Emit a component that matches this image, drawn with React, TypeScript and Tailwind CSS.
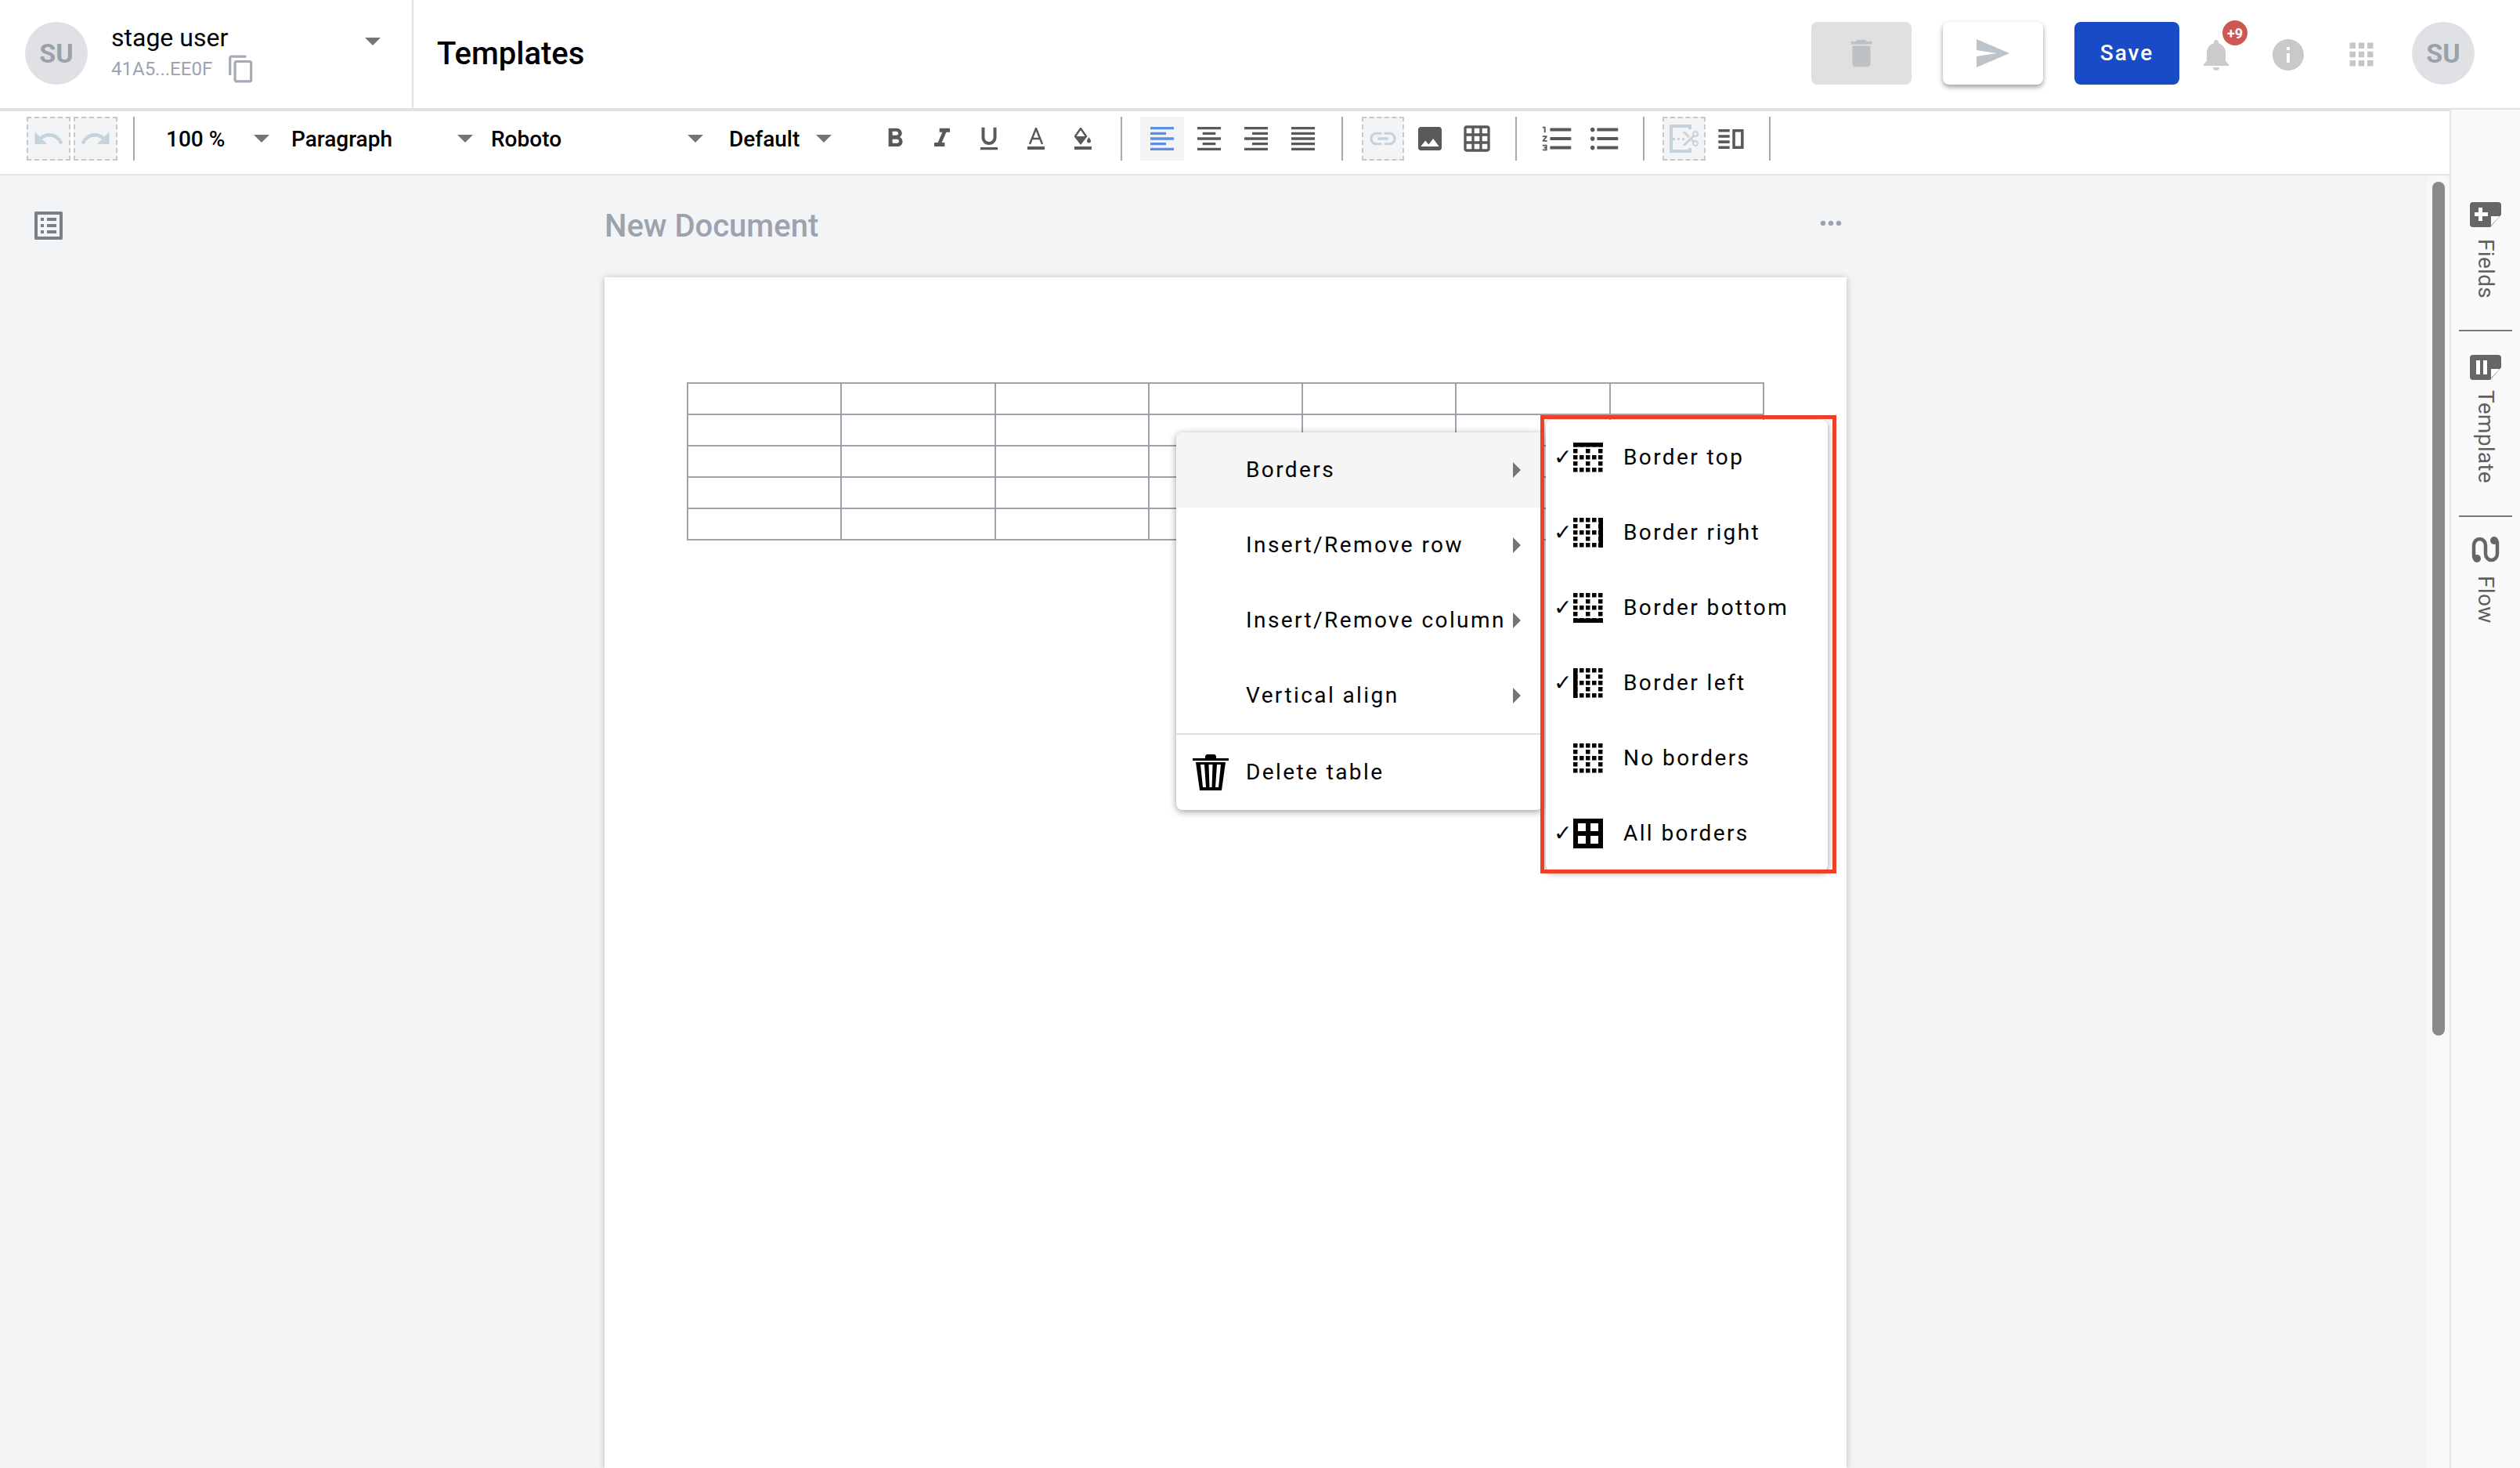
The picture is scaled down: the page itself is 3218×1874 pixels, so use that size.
import type { ReactNode } from 'react'
import {
  MdApps,
  MdContentCopy,
  MdDelete,
  MdFormatAlignCenter,
  MdFormatAlignJustify,
  MdFormatAlignLeft,
  MdFormatAlignRight,
  MdFormatBold,
  MdFormatItalic,
  MdFormatListBulleted,
  MdFormatListNumbered,
  MdFormatUnderlined,
  MdGridOn,
  MdImage,
  MdInfo,
  MdLink,
  MdListAlt,
  MdMoreHoriz,
  MdNotifications,
  MdRedo,
  MdUndo,
} from 'react-icons/md'

const ICON = '#58595b'
const OFF = '#c5d3dd'

function Caret() {
  return <span className="h-0 w-0 shrink-0 border-x-[10px] border-t-[10px] border-x-transparent border-t-[#757575]" />
}

function Divider({ className }: { className: string }) {
  return <span className={`h-[56px] w-[2px] shrink-0 bg-[#a4a9b0] ${className}`} />
}

function Dashed({ className, children }: { className: string; children: ReactNode }) {
  return (
    <span className={`flex h-[56px] shrink-0 items-center justify-center border-2 border-dashed border-[#c6c9cd] bg-[#f3f4f6] ${className}`}>
      {children}
    </span>
  )
}

function Tool({ children }: { children: ReactNode }) {
  return <span className="flex h-[56px] w-[60px] shrink-0 items-center justify-center">{children}</span>
}

function Picker({ label, className }: { label: string; className: string }) {
  return (
    <span className={`flex h-[56px] shrink-0 items-center justify-between text-[28px] font-medium text-black ${className}`}>
      <span className="pt-[2px]">{label}</span>
      <Caret />
    </span>
  )
}

function Avatar() {
  return (
    <span className="flex h-[80px] w-[80px] shrink-0 items-center justify-center rounded-full bg-[#dfe1e5] text-[34px] font-bold text-[#9aa1aa]">
      SU
    </span>
  )
}

function Header() {
  return (
    <header className="flex h-[140px] shrink-0 items-center border-b-2 border-[#e0e2e6] bg-white pb-[2px]">
      <div className="-mb-[2px] flex h-[138px] w-[528px] shrink-0 items-center border-r-2 border-[#dfe1e5] pb-[2px] pl-[32px] pr-[40px]">
        <Avatar />
        <div className="ml-[30px] flex flex-col">
          <span className="text-[32px] leading-[36px] text-black">stage user</span>
          <span className="mt-[4px] flex h-[36px] items-center text-[24px] text-[#9ca3af]">
            41A5...EE0F
            <MdContentCopy size={38} color="#a3acb5" className="ml-[18px]" />
          </span>
        </div>
        <span className="ml-auto">
          <Caret />
        </span>
      </div>
      <h1 className="ml-[30px] mt-[1px] text-[40px] font-medium text-black">Templates</h1>
      <div className="ml-auto flex items-center pr-[58px]">
        <span className="flex h-[80px] w-[128px] items-center justify-center rounded-[8px] bg-[#e0e0e0]">
          <MdDelete size={46} color="#bcc1c6" />
        </span>
        <span className="ml-[40px] flex h-[80px] w-[128px] items-center justify-center rounded-[8px] bg-white shadow-[0_3px_6px_rgba(0,0,0,0.4)]">
          <svg width="42" height="36" viewBox="0 0 42 36">
            <path d="M0 0 42 18 0 36V22L26 18 0 14Z" fill="#bcc4cb" />
          </svg>
        </span>
        <span className="ml-[40px] flex h-[80px] w-[134px] items-center justify-center rounded-[8px] bg-[#1a4bc6] text-[28px] font-medium tracking-[2px] text-white">
          Save
        </span>
        <span className="relative ml-[23px] mt-[4px] flex">
          <MdNotifications size={48} color="#cbcbcb" />
          <span className="absolute -top-[20px] left-[32px] flex h-[32px] w-[32px] items-center justify-center rounded-full bg-[#cd5752] text-[18px] font-bold text-white">
            +9
          </span>
        </span>
        <MdInfo size={48} color="#c8c9ca" className="ml-[44px] mt-[4px]" />
        <MdApps size={45} color="#c6c6c6" className="ml-[47px] mt-[2px]" />
        <span className="ml-[42px] flex">
          <Avatar />
        </span>
      </div>
    </header>
  )
}

function TextColorIcon() {
  return (
    <svg width="22" height="28" viewBox="0 0 22 28">
      <path d="M3 21 11 1 19 21M6 14H16" fill="none" stroke={ICON} strokeWidth="2.500" />
      <rect y="24" width="22" height="4" fill={ICON} />
    </svg>
  )
}

function FillColorIcon() {
  return (
    <svg width="22" height="28" viewBox="0 0 22 28">
      <path d="M8 1 15 11 8 20 1 11Z" fill="none" stroke={ICON} strokeWidth="2.500" />
      <path d="M1 11H15L8 20Z" fill={ICON} />
      <path d="M18.500 12C17 14.500 16 15.500 16 17A2.500 2.500 0 0 0 21 17C21 15.500 20 14.500 18.500 12Z" fill={ICON} />
      <rect y="24" width="22" height="4" fill={ICON} />
    </svg>
  )
}

function PageBreakIcon() {
  return (
    <svg width="38" height="36" viewBox="0 0 38 36">
      <rect x="2" y="2" width="24" height="32" fill="none" stroke={OFF} strokeWidth="4" />
      <rect x="4" y="17" width="3" height="3" fill={OFF} />
      <rect x="10" y="17" width="3" height="3" fill={OFF} />
      <rect x="16" y="17" width="3" height="3" fill={OFF} />
      <rect x="20" y="6" width="18" height="24" fill="#f3f4f6" />
      <path
        transform="translate(39 6) scale(-1 1)"
        d="M9.64 7.64c.23-.5.36-1.05.36-1.64 0-2.21-1.79-4-4-4S2 3.79 2 6s1.79 4 4 4c.59 0 1.14-.13 1.64-.36L10 12l-2.36 2.36C7.14 14.13 6.59 14 6 14c-2.21 0-4 1.79-4 4s1.79 4 4 4 4-1.79 4-4c0-.59-.13-1.14-.36-1.64L12 14l7 7h3v-1L9.64 7.64zM6 8c-1.1 0-2-.89-2-2s.9-2 2-2 2 .89 2 2-.9 2-2 2zm0 12c-1.1 0-2-.89-2-2s.9-2 2-2 2 .89 2 2-.9 2-2 2zm6-7.5c-.28 0-.5-.22-.5-.5s.22-.5.5-.5.5.22.5.5-.22.5-.5.5zM19 3l-6 6 2 2 7-7V3z"
        fill={OFF}
      />
    </svg>
  )
}

function SplitIcon() {
  return (
    <svg width="43" height="43" viewBox="0 0 24 24">
      <path fillRule="evenodd" d="M3 15h8v-2H3v2zm0 4h8v-2H3v2zm0-8h8V9H3v2zm0-6v2h8V5H3zm10 0h8v14h-8V5zm2 2v10h4V7h-4z" fill={ICON} />
    </svg>
  )
}

function Toolbar() {
  return (
    <div className="flex h-[84px] shrink-0 items-start border-y-2 border-[#e0e2e6] bg-white pl-[34px] pt-[7px]">
      <Dashed className="w-[56px]">
        <MdUndo size={42} color={OFF} />
      </Dashed>
      <Dashed className="ml-[4px] w-[56px]">
        <MdRedo size={42} color={OFF} />
      </Dashed>
      <Divider className="ml-[20px]" />
      <Picker label="100 %" className="ml-[40px] w-[132px]" />
      <Picker label="Paragraph" className="ml-[28px] w-[232px]" />
      <Picker label="Roboto" className="ml-[23px] w-[271px]" />
      <Picker label="Default" className="ml-[33px] w-[131px]" />
      <span className="ml-[51px] flex">
        <Tool><MdFormatBold size={40} color={ICON} /></Tool>
        <Tool><MdFormatItalic size={40} color={ICON} /></Tool>
        <Tool><MdFormatUnderlined size={38} color={ICON} /></Tool>
        <Tool><TextColorIcon /></Tool>
        <Tool><FillColorIcon /></Tool>
      </span>
      <Divider className="ml-[18px]" />
      <span className="ml-[23px] flex gap-[4px]">
        <span className="flex h-[56px] w-[56px] items-center justify-center bg-[#f3f4f6]">
          <MdFormatAlignLeft size={40} color="#5b8ee6" />
        </span>
        <span className="flex h-[56px] w-[56px] items-center justify-center">
          <MdFormatAlignCenter size={40} color={ICON} />
        </span>
        <span className="flex h-[56px] w-[56px] items-center justify-center">
          <MdFormatAlignRight size={40} color={ICON} />
        </span>
        <span className="flex h-[56px] w-[56px] items-center justify-center">
          <MdFormatAlignJustify size={40} color={ICON} />
        </span>
      </span>
      <Divider className="ml-[21px]" />
      <Dashed className="ml-[24px] w-[54px]">
        <MdLink size={40} color={OFF} />
      </Dashed>
      <span className="ml-[3px] flex">
        <Tool><MdImage size={40} color={ICON} /></Tool>
        <Tool><MdGridOn size={40} color={ICON} /></Tool>
      </span>
      <Divider className="ml-[19px]" />
      <span className="ml-[22px] flex">
        <Tool><MdFormatListNumbered size={46} color={ICON} /></Tool>
        <Tool><MdFormatListBulleted size={46} color={ICON} /></Tool>
      </span>
      <Divider className="ml-[19px]" />
      <Dashed className="ml-[23px] w-[55px]">
        <PageBreakIcon />
      </Dashed>
      <span className="ml-[2px] flex">
        <Tool><SplitIcon /></Tool>
      </span>
      <Divider className="ml-[19px]" />
    </div>
  )
}

function BinIcon() {
  return (
    <svg width="46" height="46" viewBox="0 0 46 46" className="shrink-0">
      <path d="M16 2 18 0H28L30 2V5H46V8H0V5H16Z" fill="#000" />
      <path d="M4 10H42L37 46H9Z" fill="#000" />
      <path d="M10 13H15L17 42H13ZM20.500 13H25.500L24.500 42H21.500ZM31 13H36L33 42H29Z" fill="#fff" />
    </svg>
  )
}

const menuRows = ['Borders', 'Insert/Remove row', 'Insert/Remove column', 'Vertical align']

function ContextMenu() {
  return (
    <div className="absolute left-[730px] top-[198px] z-10 w-[468px] overflow-hidden rounded-[8px] bg-white text-[28px] tracking-[2.4px] text-black shadow-[0_2px_10px_rgba(0,0,0,0.4)]">
      {menuRows.map((row, i) => (
        <div key={row} className={`flex h-[96px] items-center justify-between pl-[89px] pr-[28px] ${i === 0 ? 'bg-[#f5f5f5]' : ''}`}>
          {row}
          <span className="h-0 w-0 border-y-[10px] border-l-[10px] border-y-transparent border-l-[#757575]" />
        </div>
      ))}
      <div className="flex h-[98px] items-center border-t-2 border-[#e0e0e0] pl-[21px]">
        <BinIcon />
        <span className="ml-[22px]">Delete table</span>
      </div>
    </div>
  )
}

type Side = 'top' | 'right' | 'bottom' | 'left' | 'none' | 'all'

// 5x5 dot grid: odd rows have dots only in every other column
const dots: [number, number][] = []
for (let r = 0; r < 5; r++) {
  for (let c = 0; c < 5; c++) {
    if (r % 2 === 0 || c % 2 === 0) dots.push([c * 8, r * 8])
  }
}

function BorderIcon({ side }: { side: Side }) {
  return (
    <svg width="38" height="38" viewBox="0 0 38 38" className="shrink-0">
      {side === 'all' ? (
        <path fillRule="evenodd" d="M0 0H38V38H0ZM6 6V16H16V6ZM22 6V16H32V6ZM6 22V32H16V22ZM22 22V32H32V22Z" fill="#000" />
      ) : (
        dots.map(([x, y]) => <rect key={`${x}-${y}`} x={x} y={y} width="5.500" height="5.500" fill="#000" />)
      )}
      {side === 'top' && <rect width="38" height="5.500" fill="#000" />}
      {side === 'right' && <rect x="32.500" width="5.500" height="38" fill="#000" />}
      {side === 'bottom' && <rect y="32.500" width="38" height="5.500" fill="#000" />}
      {side === 'left' && <rect width="5.500" height="38" fill="#000" />}
    </svg>
  )
}

const borderRows: { label: string; side: Side; checked: boolean }[] = [
  { label: 'Border top', side: 'top', checked: true },
  { label: 'Border right', side: 'right', checked: true },
  { label: 'Border bottom', side: 'bottom', checked: true },
  { label: 'Border left', side: 'left', checked: true },
  { label: 'No borders', side: 'none', checked: false },
  { label: 'All borders', side: 'all', checked: true },
]

function BordersMenu() {
  return (
    <>
      <div className="absolute left-[1202px] top-[182px] z-20 w-[360px] rounded-[8px] bg-white text-[28px] tracking-[2.4px] text-black shadow-[0_2px_10px_rgba(0,0,0,0.4)]">
        {borderRows.map(({ label, side, checked }) => (
          <div key={label} className="flex h-[96px] items-center pl-[10px]">
            <span className="w-[25px] font-['DejaVu_Sans',sans-serif] text-[28px] font-bold tracking-normal">{checked ? '✓' : ''}</span>
            <BorderIcon side={side} />
            <span className="ml-[26px]">{label}</span>
          </div>
        ))}
      </div>
      {/* red annotation frame from the original screenshot */}
      <div className="absolute left-[1195px] top-[176px] z-30 h-[585px] w-[378px] border-[5px] border-[#ee4027]" />
    </>
  )
}

function Canvas() {
  return (
    <div className="relative flex min-h-0 flex-1 overflow-hidden bg-[#f3f4f6]">
      <div className="w-[772px] shrink-0 pl-[38px] pt-[40px]">
        <MdListAlt size={48} color="#7b8088" />
      </div>
      <div className="flex w-[1586px] shrink-0 flex-col">
        <div className="flex h-[130px] shrink-0 items-center justify-between">
          <span className="text-[40px] font-medium text-[#9ca3af]">New Document</span>
          <MdMoreHoriz size={40} color="#9ca3af" className="mb-[8px]" />
        </div>
        <div className="relative flex-1 bg-white pl-[105px] pt-[134px] shadow-[0_1px_8px_rgba(0,0,0,0.25)]">
          <table className="w-[1376px] table-fixed border-collapse">
            <tbody>
              {[0, 1, 2, 3, 4].map((r) => (
                <tr key={r} className="h-[40px]">
                  {[0, 1, 2, 3, 4, 5, 6].map((c) => (
                    <td key={c} className="border-2 border-[#9ca3af]" />
                  ))}
                </tr>
              ))}
            </tbody>
          </table>
          <ContextMenu />
          <BordersMenu />
        </div>
      </div>
      <div className="absolute bottom-0 right-0 top-0 w-[30px] rounded-t-[14px] bg-[#f7f8f9]" />
      <div className="absolute right-[6px] top-[8px] h-[1090px] w-[16px] rounded-full bg-[#88898b]" />
    </div>
  )
}

function TabIcon({ kind }: { kind: 'plus' | 'bars' }) {
  return (
    <svg width="40" height="32" viewBox="0 0 40 32" className="shrink-0">
      <path d="M4 0H36A4 4 0 0 1 40 4V16L26 32H4A4 4 0 0 1 0 28V4A4 4 0 0 1 4 0Z" fill="#666" />
      <path d="M27 30V18H38Z" fill="#fff" />
      {kind === 'plus' ? (
        <path d="M10 7H15V13H22V18H15V24H10V18H5V13H10Z" transform="translate(1 0)" fill="#fff" />
      ) : (
        <path d="M8 7H13V25H8ZM17 7H22V25H17Z" fill="#fff" />
      )}
    </svg>
  )
}

function FlowIcon() {
  return (
    <svg width="36" height="35" viewBox="0 0 36 35" className="shrink-0">
      <path d="M7 29H6Q3 29 3 26V12A7.500 8 0 0 1 18 12V23A7.500 8 0 0 0 33 23V9Q33 6 30 6" fill="none" stroke="#666" strokeWidth="4.500" />
      <circle cx="7" cy="29" r="5" fill="#666" />
      <circle cx="29" cy="6" r="5" fill="#666" />
    </svg>
  )
}

function TabLabel({ className, children }: { className: string; children: ReactNode }) {
  return <span className={`text-[28px] leading-[28px] tracking-[0.3px] text-[#5f5f5f] [writing-mode:vertical-rl] ${className}`}>{children}</span>
}

function Sidebar() {
  return (
    <aside className="flex w-[90px] shrink-0 flex-col items-center border-l-2 border-[#e5e7eb] bg-[#fafafa] pt-[118px]">
      <TabIcon kind="plus" />
      <TabLabel className="mt-[15px]">Fields</TabLabel>
      <span className="mt-[40px] h-[2px] w-[68px] bg-[#777]" />
      <span className="mt-[30px] flex">
        <TabIcon kind="bars" />
      </span>
      <TabLabel className="mt-[13px]">Template</TabLabel>
      <span className="mt-[41px] h-[2px] w-[68px] bg-[#777]" />
      <span className="mt-[24px] flex">
        <FlowIcon />
      </span>
      <TabLabel className="mt-[16px]">Flow</TabLabel>
    </aside>
  )
}

export default function App() {
  return (
    <div className="flex h-[1874px] w-[3218px] flex-col overflow-hidden bg-white font-['Roboto',sans-serif]">
      <Header />
      <div className="flex min-h-0 flex-1">
        <main className="flex min-w-0 flex-1 flex-col">
          <Toolbar />
          <Canvas />
        </main>
        <Sidebar />
      </div>
    </div>
  )
}
